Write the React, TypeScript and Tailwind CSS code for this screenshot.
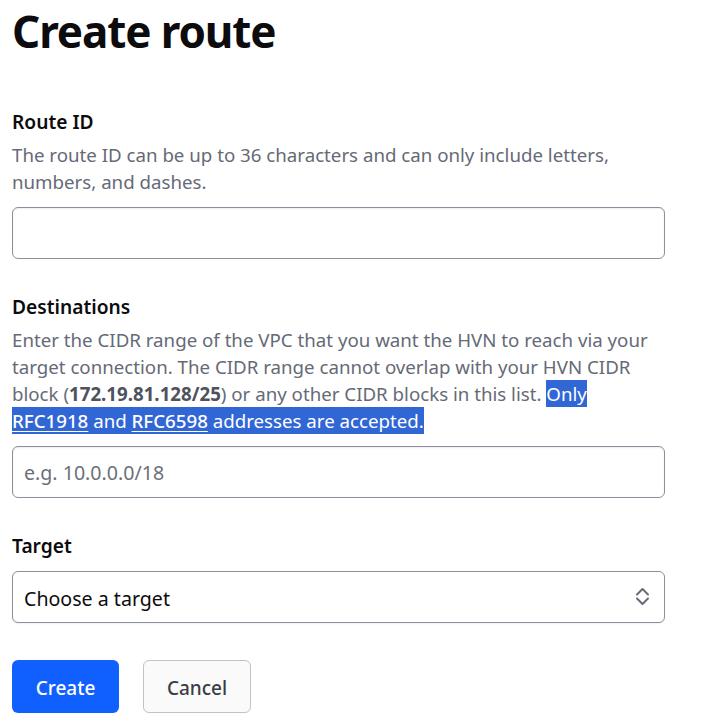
const font = { fontFamily: '"Noto Sans", "Open Sans", sans-serif' };

function Label({ children }: { children: React.ReactNode }) {
  return (
    <div className="text-[19.2px] leading-[27px] font-semibold text-[#0c0c0e]">{children}</div>
  );
}

function Help({ children }: { children: React.ReactNode }) {
  return <div className="mt-[6px] text-[18.7px] leading-[27px] text-[#656a76]">{children}</div>;
}

export default function App() {
  return (
    <div style={font} className="bg-white min-h-[726px] pl-3 pt-[5px]">
      <div className="w-[653px]">
        <h1 className="text-[44px] leading-[52.8px] font-bold tracking-[-1.1px] text-[#0c0c0e]">
          Create route
        </h1>

        <div className="mt-[50px]">
          <Label>Route ID</Label>
          <Help>
            The route ID can be up to 36 characters and can only include letters,
            <br />
            numbers, and dashes.
          </Help>
          <input
            type="text"
            className="mt-[12px] block w-full h-[52px] rounded-[6px] border border-[#8c909c] bg-white px-[11px] pt-[2px] text-[19.6px] text-[#0c0c0e] shadow-[inset_0_1px_2px_rgba(0,0,0,0.08)] outline-none"
          />
        </div>

        <div className="mt-[34px]">
          <Label>Destinations</Label>
          <Help>
            Enter the CIDR range of the VPC that you want the HVN to reach via your
            <br />
            target connection. The CIDR range cannot overlap with your HVN CIDR
            <br />
            block (<span className="font-bold text-[#4e525c]">172.19.81.128/25</span>) or any other CIDR
            blocks in this list.{" "}
            <span className="bg-[#3166d5] text-white py-px">Only </span>
            <br />
            <span className="bg-[#3166d5] text-white py-px">
              <span className="underline underline-offset-[3px] font-medium">RFC1918</span> and{" "}
              <span className="underline underline-offset-[3px] font-medium">RFC6598</span> addresses
              are accepted.
            </span>
          </Help>
          <input
            type="text"
            placeholder="e.g. 10.0.0.0/18"
            className="mt-[12px] block w-full h-[52px] rounded-[6px] border border-[#8c909c] bg-white px-[11px] pt-[2px] text-[19.6px] text-[#0c0c0e] placeholder:text-[#6b6f7a] shadow-[inset_0_1px_2px_rgba(0,0,0,0.08)] outline-none"
          />
        </div>

        <div className="mt-[34px]">
          <Label>Target</Label>
          <div className="mt-[12px] flex h-[52px] w-full items-center justify-between rounded-[6px] border border-[#8c909c] bg-white pl-[11px] pr-[10px] shadow-[0_1px_2px_rgba(0,0,0,0.06)]">
            <span className="pt-[3px] text-[19.6px] text-[#0c0c0e]">Choose a target</span>
            <svg width="24" height="24" viewBox="0 0 24 24" fill="none" stroke="#656a76" strokeWidth="2" strokeLinecap="round" strokeLinejoin="round">
              <path d="M7 9.5L12.5 4L18 9.5" />
              <path d="M7 13.5L12.5 19L18 13.5" />
            </svg>
          </div>
        </div>

        <div className="mt-[37px] flex gap-[24px]">
          <button className="flex h-[53px] w-[107px] items-center justify-center rounded-[6px] bg-[#1060ff] pt-[4px] text-[19px] font-medium text-white">
            Create
          </button>
          <button className="flex h-[53px] w-[108px] items-center justify-center rounded-[6px] border border-[#bfc2c9] bg-[#fafafa] pt-[4px] text-[19px] font-medium text-[#3b3d45]">
            Cancel
          </button>
        </div>
      </div>
    </div>
  );
}
